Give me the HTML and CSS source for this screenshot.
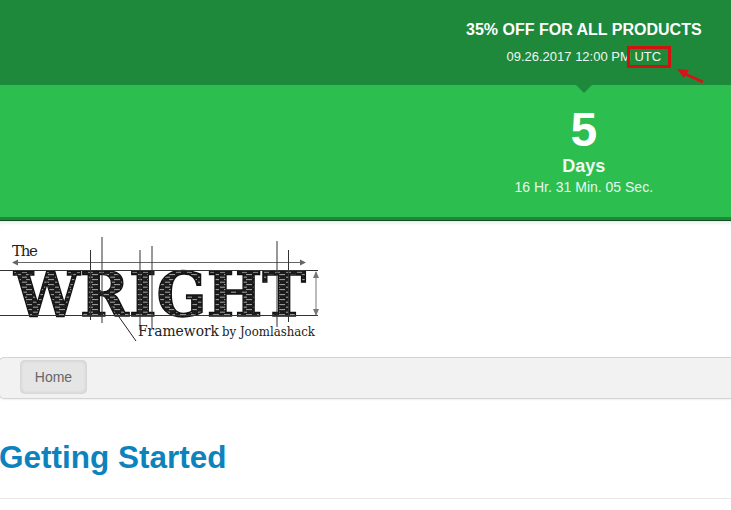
FILE: index.html
```html
<!DOCTYPE html>
<html lang="en">
<head>
<meta charset="utf-8">
<title>Getting Started</title>
<link rel="stylesheet" href="styles.css">
</head>
<body>
<section class="promo">
  <div class="promo-top">
    <div class="promo-col">
      <h2 class="promo-title">35% OFF FOR ALL PRODUCTS</h2>
      <p class="promo-date">09.26.2017 12:00 PM <span class="utc">UTC</span></p>
      <svg class="arrow" width="34" height="18" viewBox="0 0 34 18"><path d="M29 16 9 7" stroke="#d5141a" stroke-width="3" fill="none"/><path d="M3 3 15 4 10 12Z" fill="#d5141a"/></svg>
    </div>
  </div>
  <div class="promo-main">
    <div class="promo-col">
      <span class="notch"></span>
      <div class="count">5</div>
      <div class="unit">Days</div>
      <div class="rest">16 Hr. 31 Min. 05 Sec.</div>
    </div>
  </div>
</section>
<header class="logo-row">
  <svg class="logo" width="330" height="125" viewBox="0 0 330 125">
    <defs>
      <pattern id="hatch" width="11" height="5" patternUnits="userSpaceOnUse">
        <rect width="11" height="5" fill="#1c1c1c"/>
        <path d="M0 1.2H5M4 3.6H10" stroke="#c8c8c8" stroke-width=".8"/>
      </pattern>
    </defs>
    <text class="logo-the" x="12" y="35" textLength="26">The</text>
    <text class="logo-big" x="14" y="94.5" textLength="292" lengthAdjust="spacingAndGlyphs" fill="url(#hatch)">WRIGHT</text>
    <g class="logo-lines">
      <path d="M0 49.5H318M0 94.5H318" stroke="#333" stroke-width="1"/>
      <path d="M13 41.5H304" stroke="#666" stroke-width="1"/>
      <path d="M12 41.5l6-3v6ZM306 41.5l-6-3v6Z" fill="#666"/>
      <path d="M316 51V94" stroke="#777" stroke-width="1"/>
      <path d="M316 50l-3 7h6ZM316 95l-3-7h6Z" fill="#777"/>
      <path d="M90.500 29V99M102 16V102M140 29V109M152 25V107M277 20V106M288.500 29V101" stroke="#333" stroke-width="1"/>
      <path d="M100 69 136 120" stroke="#222" stroke-width="1"/>
    </g>
    <text class="logo-fw" x="138" y="115" textLength="81" lengthAdjust="spacingAndGlyphs">Framework</text>
    <text class="logo-by" x="222" y="115" textLength="93" lengthAdjust="spacingAndGlyphs">by Joomlashack</text>
  </svg>
</header>
<nav class="navbar">
  <a class="nav-item" href="#">Home</a>
</nav>
<main>
  <h1 class="page-title">Getting Started</h1>
  <hr class="rule">
</main>
</body>
</html>
```
FILE: styles.css
```css
* { box-sizing: border-box; }
html, body { margin: 0; padding: 0; }
body {
  background: #fff;
  color: #555;
  font-family: "Liberation Sans", Arial, sans-serif;
  overflow: hidden;
  height: 510px;
}
.promo { color: #fff; border-bottom: 1px solid #0f4f22; }
.promo-top {
  background: #1e883b;
  height: 85px;
  display: grid;
  grid-template-columns: 3fr 2fr;
}
.promo-main {
  background: #2dbe50;
  height: 135px;
  display: grid;
  grid-template-columns: 3fr 2fr;
  border-bottom: 3px solid #1e883b;
}
.promo-col {
  grid-column: 2;
  position: relative;
  text-align: center;
  padding-right: 2px;
}
.promo-title {
  margin: 0;
  padding-top: 20px;
  font-size: 16px;
  line-height: 20px;
  font-weight: 700;
}
.promo-date {
  margin: 7px 0 0;
  font-size: 13px;
  line-height: 20px;
  color: #eef8f0;
}
.utc { position: relative; }
.utc::after {
  content: "";
  position: absolute;
  left: -7px;
  right: -10px;
  top: -3px;
  bottom: -4px;
  border: 3px solid #d3110f;
}
.arrow { position: absolute; left: 235px; top: 66px; }
.notch {
  position: absolute;
  left: 50%;
  top: 0;
  margin-left: -9px;
  border: 8px solid transparent;
  border-top-color: #1e883b;
  border-bottom: 0;
}
.count {
  padding-top: 17px;
  font-size: 48px;
  line-height: 55px;
  font-weight: 700;
}
.unit {
  font-size: 18px;
  line-height: 18px;
  font-weight: 700;
  color: #f0faf2;
}
.rest {
  margin-top: 1px;
  font-size: 14px;
  line-height: 22px;
  color: #e8f7ec;
}
.logo-row {
  height: 136px;
  box-shadow: inset 0 4px 4px -3px #ddd;
}
.logo { display: block; }
.logo-the { font: 15px "DejaVu Serif", serif; fill: #222; }
.logo-big { font: 700 62px "DejaVu Serif", serif; stroke: #111; stroke-width: 1.4; }
.logo-fw { font: 14.5px "DejaVu Serif", serif; fill: #222; }
.logo-by { font: 12px "DejaVu Serif", serif; fill: #222; }
.navbar {
  height: 42px;
  margin-left: -1px;
  background: #f2f2f2;
  border: 1px solid #d4d4d4;
  border-right: 0;
  border-radius: 5px 0 0 5px;
  box-shadow: 0 1px 2px rgba(0,0,0,.06);
  padding: 2px 0 0 20px;
}
.nav-item {
  display: block;
  width: 67px;
  height: 34px;
  line-height: 34px;
  text-align: center;
  font-size: 14px;
  color: #666;
  text-decoration: none;
  background: #e5e5e5;
  border-radius: 5px;
  box-shadow: inset 0 0 4px rgba(0,0,0,.14);
}
.page-title {
  margin: 0 0 0 -1px;
  padding-top: 40px;
  font-size: 31.5px;
  line-height: 36px;
  font-weight: 700;
  color: #0d83bd;
}
.rule {
  margin: 23px 0 0;
  border: 0;
  border-top: 1px solid #e8e8e8;
}
```
